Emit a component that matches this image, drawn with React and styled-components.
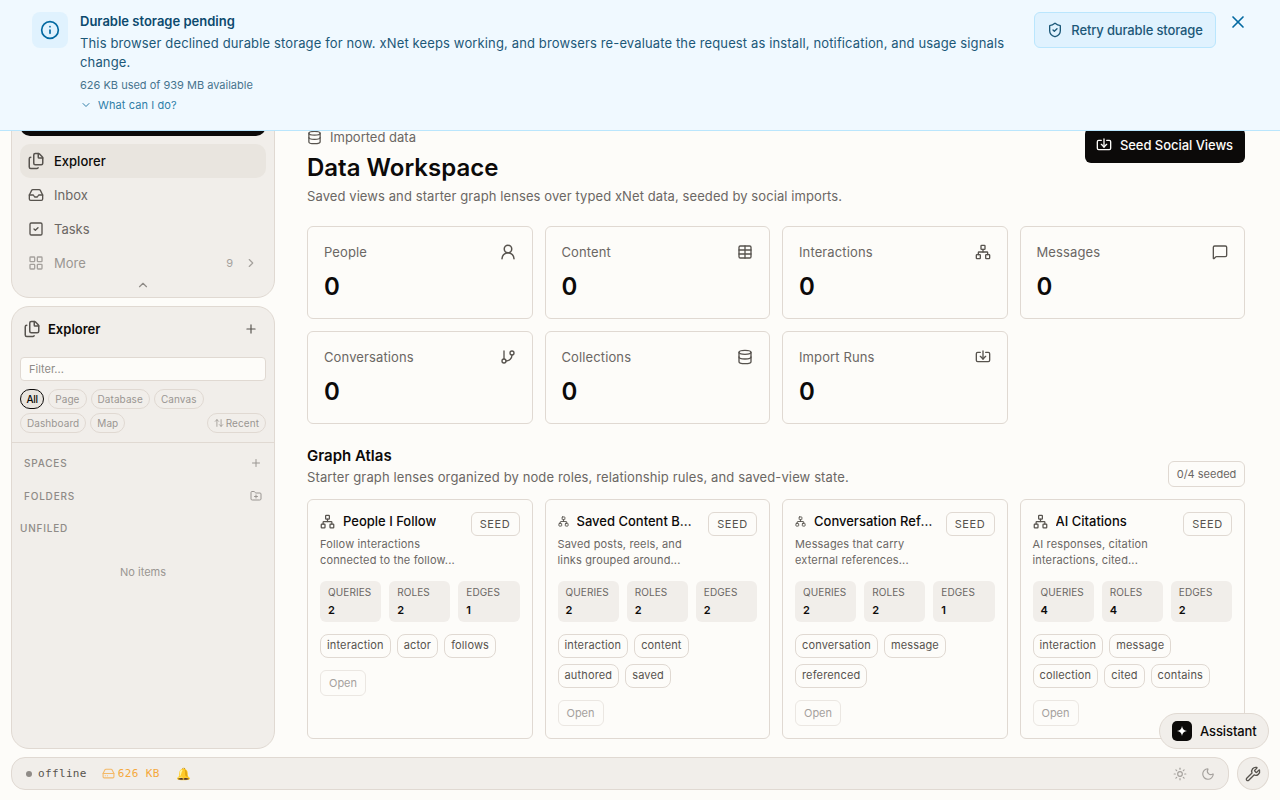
import React from 'react';
import styled, { createGlobalStyle } from 'styled-components';
import {
  Info, X, ShieldCheck, Import, Database, Files, Inbox, SquareCheck, LayoutGrid,
  ChevronRight, ChevronUp, ChevronDown, Plus, FolderPlus, ArrowUpDown, UserRound, Table, Network,
  MessageSquare, GitBranch, HardDrive, Sun, Moon, Wrench as WrenchIcon,
} from 'lucide-react';

const Global = createGlobalStyle`
  html, body { margin: 0; padding: 0; height: 100%; overflow: hidden; background: #fdfcf9; }
  body { font-family: Inter, "Liberation Sans", sans-serif; color: #0c0a09; }
  * { box-sizing: border-box; }
`;

const Shell = styled.div`
  position: relative; width: 1280px; height: 800px; display: flex; flex-direction: column; gap: 8px;
  padding: 8px 11px 10px; overflow: hidden;
`;
const Banner = styled.div`
  position: absolute; top: 0; left: 0; right: 0; height: 131px; z-index: 5; display: flex; align-items: flex-start;
  gap: 12px; padding: 12px 32px; background: #f0f9ff; border-bottom: 1px solid #bae6fd;
`;
const BannerIcon = styled.div`
  width: 36px; height: 36px; flex: none; border-radius: 8px; background: #e0f2fe; color: #0369a1;
  display: flex; align-items: center; justify-content: center;
`;
const BannerText = styled.div`flex: 1; min-width: 0; padding-right: 10px;`;
const BannerTitle = styled.div`font-size: 13px; font-weight: 600; line-height: 18px; color: #0c4a6e;`;
const BannerBody = styled.div`font-size: 13px; line-height: 19px; color: #1c5878; margin-top: 4px; letter-spacing: .135px;`;
const BannerMeta = styled.div`font-size: 11px; line-height: 16px; color: #47748e; margin-top: 5px;`;
const BannerLink = styled.div`
  display: flex; align-items: center; gap: 6px; font-size: 11px; line-height: 16px; color: #2f7ea8; margin-top: 4px; letter-spacing: .1px;
`;
const RetryButton = styled.div`
  width: 182px; height: 36px; flex: none; display: flex; align-items: center; justify-content: center; gap: 8px;
  border: 1px solid #bae6fd; border-radius: 6px; background: #e0f2fe; color: #1c5878; font-size: 13px; font-weight: 500; letter-spacing: -.14px;
`;
const CloseIcon = styled.div`color: #0369a1; width: 20px; height: 20px; display: flex; justify-content: center; flex: none;`;

const Workspace = styled.div`flex: 1; min-height: 0; display: flex;`;
const Sidebar = styled.aside`width: 264px; flex: none; display: flex; flex-direction: column; gap: 8px;`;
const NavPanel = styled.div`
  height: 290px; flex: none; display: flex; flex-direction: column; justify-content: flex-end; padding: 0 8px 7px;
  background: #f1eeea; border: 1px solid #e0d9d2; border-radius: 18px;
`;
const DarkButton = styled.div`height: 36px; border-radius: 10px; background: #0c0a09; margin-bottom: 8px;`;
const NavItem = styled.div`
  height: 34px; display: flex; align-items: center; gap: 10px; padding: 0 8px 0 8px; border-radius: 10px; font-size: 13px;
  background: ${p => (p.$active ? '#e9e5df' : 'transparent')};
  color: ${p => (p.$active ? '#0c0a09' : p.$muted ? '#9a9692' : '#6b6764')};
  font-weight: ${p => (p.$active ? 500 : 400)};
  svg { flex: none; color: ${p => (p.$muted ? '#a5a19d' : '#57534e')}; }
  svg.lucide-files { margin: 0 -1px; }
`;
const NavCount = styled.span`margin-left: auto; font-size: 11px; color: #a5a19d; margin-right: 1px;`;
const Collapse = styled.div`height: 10px; display: flex; justify-content: center; color: #8f8b87; align-items: center;`;

const ExplorerPanel = styled.div`
  flex: 1; min-height: 0; background: #f1eeea; border: 1px solid #e0d9d2; border-radius: 18px;
  display: flex; flex-direction: column;
`;
const ExplorerHead = styled.div`
  height: 43px; display: flex; align-items: center; gap: 8px; padding: 0 16px 0 12px;
  font-size: 13px; font-weight: 600; svg { color: #57534e; flex: none; }
  svg.lucide-files { margin: 0 -1px; }
`;
const HeadPlus = styled.span`margin-left: auto; line-height: 0;`;
const FilterBox = styled.div`
  height: 24px; margin: 7px 8px 8px; padding: 0 8px; display: flex; align-items: center; border: 1px solid #e0d9d2;
  border-radius: 4px; background: #fdfcf9; font-size: 11px; color: #8f8b87;
`;
const ChipRows = styled.div`display: flex; flex-wrap: wrap; gap: 4px; padding: 0 8px 9px; border-bottom: 1px solid #e0d9d2;`;
const FilterChip = styled.div`
  height: 20px; padding: 0 ${p => (p.$active ? 5.5 : 6)}px; display: flex; align-items: center; gap: 2px; border-radius: 10px; font-size: 10px;
  border: 1px solid ${p => (p.$active ? '#0c0a09' : '#e0d9d2')}; color: ${p => (p.$active ? '#0c0a09' : '#9a9692')};
  font-weight: ${p => (p.$active ? 500 : 400)}; background: ${p => (p.$active ? '#e9e5df' : 'transparent')};
  letter-spacing: ${p => (p.$active ? '-.3px' : '.08px')};
  margin-left: ${p => (p.$push ? 'auto' : 0)};
`;
const SectionRow = styled.div`
  display: flex; align-items: center; justify-content: space-between; height: 16px; padding: 0 ${p => (p.$flush ? 8 : 12)}px;
  margin-top: ${p => p.$top}px; font-size: 10px; letter-spacing: .8px; font-weight: 500; color: #8f8b87;
  svg { color: #9a9692; }
`;
const Empty = styled.div`margin-top: 29px; text-align: center; font-size: 11px; color: #9a9692;`;

const Main = styled.main`flex: 1; min-width: 0; padding: 120px 24px 0 32px; overflow: hidden;`;
const PageHead = styled.div`display: flex; justify-content: space-between; align-items: flex-start;`;
const Crumb = styled.div`
  display: flex; align-items: center; gap: 8px; font-size: 13px; height: 18px; color: #6b6764; svg { color: #57534e; }
`;
const Title = styled.h1`margin: 6px 0 0; font-size: 24px; line-height: 32px; font-weight: 600;`;
const Subtitle = styled.p`margin: 2px 0 0; font-size: 13px; line-height: 20px; color: #6b6764; letter-spacing: .09px;`;
const SeedButton = styled.div`
  width: 160px; height: 35px; padding: 0 1px 1px 0; border-radius: 6px; background: #0c0a09; color: #fdfcf9; font-size: 13px; font-weight: 500;
  display: flex; align-items: center; justify-content: center; gap: 8px; letter-spacing: -.05px;
`;
const Grid = styled.div`display: grid; grid-template-columns: repeat(4, minmax(0, 1fr)); gap: 12px;`;
const StatGrid = styled(Grid)`margin-top: 20px;`;
const StatCard = styled.div`
  height: 93px; padding: 15px 16px; border: 1px solid #e0d9d2; border-radius: 6px; display: flex; flex-direction: column;
`;
const StatTop = styled.div`
  display: flex; justify-content: space-between; align-items: center; font-size: 13px; line-height: 20px; color: #6b6764; letter-spacing: .12px;
  svg { color: #57534e; }
  svg.lucide-user-round { margin: -1px -1px -1px 0; }
`;
const StatValue = styled.div`font-size: 24px; font-weight: 600; line-height: 32px; margin-top: 9px;`;
const AtlasHead = styled.div`display: flex; justify-content: space-between; align-items: flex-end; margin-top: 22px;`;
const AtlasTitle = styled.h2`margin: 0; font-size: 15px; line-height: 20px; font-weight: 600;`;
const AtlasSub = styled.p`margin: 1px 0 0; font-size: 13px; line-height: 20px; color: #6b6764; letter-spacing: .12px;`;
const SeededBadge = styled.div`
  width: 77px; height: 26px; border: 1px solid #e0d9d2; border-radius: 6px; font-size: 11px; color: #6b6764;
  display: flex; align-items: center; justify-content: center;
`;
const AtlasGrid = styled(Grid)`margin-top: 12px;`;
const LensCard = styled.div`
  height: 240px; padding: 12px; border: 1px solid #e0d9d2; border-radius: 6px; display: flex; flex-direction: column; align-items: flex-start;
`;
const LensTop = styled.div`display: flex; align-items: flex-start; gap: 12px; width: 100%;`;
const LensName = styled.div`
  flex: 1; min-width: 0; display: flex; align-items: center; gap: 8px; height: 18px; font-size: 13px; font-weight: 500;
  svg { flex: none; color: #57534e; }
`;
const LensLabel = styled.span`overflow: hidden; white-space: nowrap; text-overflow: ellipsis; min-width: 0;`;
const SeedTag = styled.div`
  width: 49px; height: 24px; flex: none; padding-bottom: 1px; border: 1px solid #e0d9d2; border-radius: 6px; font-size: 11px; letter-spacing: .6px;
  color: #57534e; display: flex; align-items: center; justify-content: center;
`;
const LensDesc = styled.p`margin: 0; font-size: 11px; line-height: 16px; color: #6b6764; letter-spacing: .15px; white-space: nowrap;`;
const Metrics = styled.div`display: grid; grid-template-columns: repeat(3, minmax(0, 1fr)); gap: 8px; width: 100%; margin-top: 13px;`;
const Metric = styled.div`height: 41px; padding: 4px 8px; border-radius: 6px; background: #f1eeea;`;
const MetricLabel = styled.div`font-size: 10px; line-height: 14px; color: #6b6764; letter-spacing: .1px;`;
const MetricValue = styled.div`font-size: 11px; line-height: 16px; font-weight: 600; margin-top: 3px;`;
const Tags = styled.div`display: flex; flex-wrap: wrap; gap: 6px; margin-top: 12px; width: 100%; padding-right: 2px;`;
const Tag = styled.div`
  height: 24px; padding: 0 6px 2px; border: 1px solid #e0d9d2; border-radius: 8px; font-size: 11px; color: #57534e; letter-spacing: .15px;
  display: flex; align-items: center;
`;
const OpenButton = styled.div`
  width: 46px; height: 26px; margin-top: 12px; border: 1px solid #ebe7e2; border-radius: 6px; font-size: 11px; color: #a5a19d;
  display: flex; align-items: center; justify-content: center;
`;

const BottomRow = styled.div`display: flex; gap: 8px; height: 33px; flex: none;`;
const StatusBar = styled.div`
  flex: 1; display: flex; align-items: center; padding: 0 14px; background: #f1eeea; border: 1px solid #e0d9d2; border-radius: 14px;
  font-family: "DejaVu Sans Mono", monospace; font-size: 11px; color: #57534e; letter-spacing: .35px;
`;
const Dot = styled.span`width: 6px; height: 6px; border-radius: 50%; background: #8f8b87; margin-right: 6px;`;
const Storage = styled.span`
  display: flex; align-items: center; gap: 3px; margin-left: 15px; color: #f5a83c;
  svg { opacity: .75; }
`;
const Bell = styled.span`margin-left: 16px; font-size: 12px; line-height: 1;`;
const Theme = styled.div`
  margin-left: auto; display: flex; gap: 14px; color: #a5a19d; line-height: 0; margin-right: -1px;
`;
const Wrench = styled.div`
  width: 32px; height: 33px; border-radius: 50%; background: #f1eeea; border: 1px solid #e0d9d2; display: flex; align-items: center;
  justify-content: center; color: #57534e;
`;
const Assistant = styled.div`
  position: absolute; z-index: 4; right: 11px; top: 713px; width: 110px; height: 36px; border-radius: 18px; background: #f1eeea;
  border: 1px solid #e0d9d2; display: flex; align-items: center; gap: 8px; padding-left: 12px; font-size: 13px; font-weight: 500; letter-spacing: -.1px;
`;
const AssistantMark = styled.div`
  width: 20px; height: 20px; border-radius: 5px; background: #0c0a09; display: flex; align-items: center; justify-content: center;
`;

const stats = [
  ['People', UserRound, 18], ['Content', Table, 16], ['Interactions', Network, 16], ['Messages', MessageSquare, 16],
  ['Conversations', GitBranch, 16], ['Collections', Database, 16], ['Import Runs', Import, 16],
];
const lenses = [
  { name: 'People I Follow', icon: 15, desc: ['Follow interactions', 'connected to the follow...'], m: [2, 2, 1], tags: ['interaction', 'actor', 'follows'] },
  { name: 'Saved Content Boards', icon: 11, desc: ['Saved posts, reels, and', 'links grouped around...'], m: [2, 2, 2], tags: ['interaction', 'content', 'authored', 'saved'] },
  { name: 'Conversation References', icon: 11, desc: ['Messages that carry', 'external references...'], m: [2, 2, 1], tags: ['conversation', 'message', 'referenced'] },
  { name: 'AI Citations', icon: 15, desc: ['AI responses, citation', 'interactions, cited...'], m: [4, 4, 2], tags: ['interaction', 'message', 'collection', 'cited', 'contains'] },
];

export default function App() {
  return (
    <Shell>
      <Global />
      <Banner>
        <BannerIcon><Info size={20} /></BannerIcon>
        <BannerText>
          <BannerTitle>Durable storage pending</BannerTitle>
          <BannerBody>This browser declined durable storage for now. xNet keeps working, and browsers re-evaluate the request as install, notification, and usage signals change.</BannerBody>
          <BannerMeta>626 KB used of 939 MB available</BannerMeta>
          <BannerLink><ChevronDown size={12} />What can I do?</BannerLink>
        </BannerText>
        <RetryButton><ShieldCheck size={16} />Retry durable storage</RetryButton>
        <CloseIcon><X size={20} /></CloseIcon>
      </Banner>
      <Workspace>
        <Sidebar>
          <NavPanel>
            <DarkButton />
            <NavItem $active><Files size={18} />Explorer</NavItem>
            <NavItem><Inbox size={16} />Inbox</NavItem>
            <NavItem><SquareCheck size={16} />Tasks</NavItem>
            <NavItem $muted><LayoutGrid size={16} />More<NavCount>9</NavCount><ChevronRight size={14} /></NavItem>
            <Collapse><ChevronUp size={14} /></Collapse>
          </NavPanel>
          <ExplorerPanel>
            <ExplorerHead><Files size={18} />Explorer<HeadPlus><Plus size={14} /></HeadPlus></ExplorerHead>
            <FilterBox>Filter...</FilterBox>
            <ChipRows>
              <FilterChip $active>All</FilterChip>
              <FilterChip>Page</FilterChip>
              <FilterChip>Database</FilterChip>
              <FilterChip>Canvas</FilterChip>
              <FilterChip>Dashboard</FilterChip>
              <FilterChip>Map</FilterChip>
              <FilterChip $push><ArrowUpDown size={10} />Recent</FilterChip>
            </ChipRows>
            <SectionRow $top={12}>SPACES<Plus size={12} /></SectionRow>
            <SectionRow $top={17}>FOLDERS<FolderPlus size={12} /></SectionRow>
            <SectionRow $top={16} $flush>UNFILED</SectionRow>
            <Empty>No items</Empty>
          </ExplorerPanel>
        </Sidebar>
        <Main>
          <PageHead>
            <div>
              <Crumb><Database size={15} />Imported data</Crumb>
              <Title>Data Workspace</Title>
              <Subtitle>Saved views and starter graph lenses over typed xNet data, seeded by social imports.</Subtitle>
            </div>
            <SeedButton><Import size={16} />Seed Social Views</SeedButton>
          </PageHead>
          <StatGrid>
            {stats.map(([label, Icon, size]) => (
              <StatCard key={label}>
                <StatTop>{label}<Icon size={size} /></StatTop>
                <StatValue>0</StatValue>
              </StatCard>
            ))}
          </StatGrid>
          <AtlasHead>
            <div>
              <AtlasTitle>Graph Atlas</AtlasTitle>
              <AtlasSub>Starter graph lenses organized by node roles, relationship rules, and saved-view state.</AtlasSub>
            </div>
            <SeededBadge>0/4 seeded</SeededBadge>
          </AtlasHead>
          <AtlasGrid>
            {lenses.map(l => (
              <LensCard key={l.name}>
                <LensTop>
                  <LensName><Network size={l.icon} /><LensLabel>{l.name}</LensLabel></LensName>
                  <SeedTag>SEED</SeedTag>
                </LensTop>
                <LensDesc>{l.desc[0]}<br />{l.desc[1]}</LensDesc>
                <Metrics>
                  {['QUERIES', 'ROLES', 'EDGES'].map((k, i) => (
                    <Metric key={k}><MetricLabel>{k}</MetricLabel><MetricValue>{l.m[i]}</MetricValue></Metric>
                  ))}
                </Metrics>
                <Tags>{l.tags.map(t => <Tag key={t}>{t}</Tag>)}</Tags>
                <OpenButton>Open</OpenButton>
              </LensCard>
            ))}
          </AtlasGrid>
        </Main>
      </Workspace>
      <BottomRow>
        <StatusBar>
          <Dot />offline
          <Storage><HardDrive size={13} />626 KB</Storage>
          <Bell>🔔</Bell>
          <Theme><Sun size={14} /><Moon size={14} /></Theme>
        </StatusBar>
        <Wrench><WrenchIcon size={16} /></Wrench>
      </BottomRow>
      <Assistant>
        <AssistantMark>
          <svg width="12" height="12" viewBox="0 0 12 12"><path d="M6 1 C6.4 4 8 5.6 11 6 C8 6.4 6.4 8 6 11 C5.6 8 4 6.4 1 6 C4 5.6 5.6 4 6 1Z" fill="#fff" /></svg>
        </AssistantMark>
        Assistant
      </Assistant>
    </Shell>
  );
}
